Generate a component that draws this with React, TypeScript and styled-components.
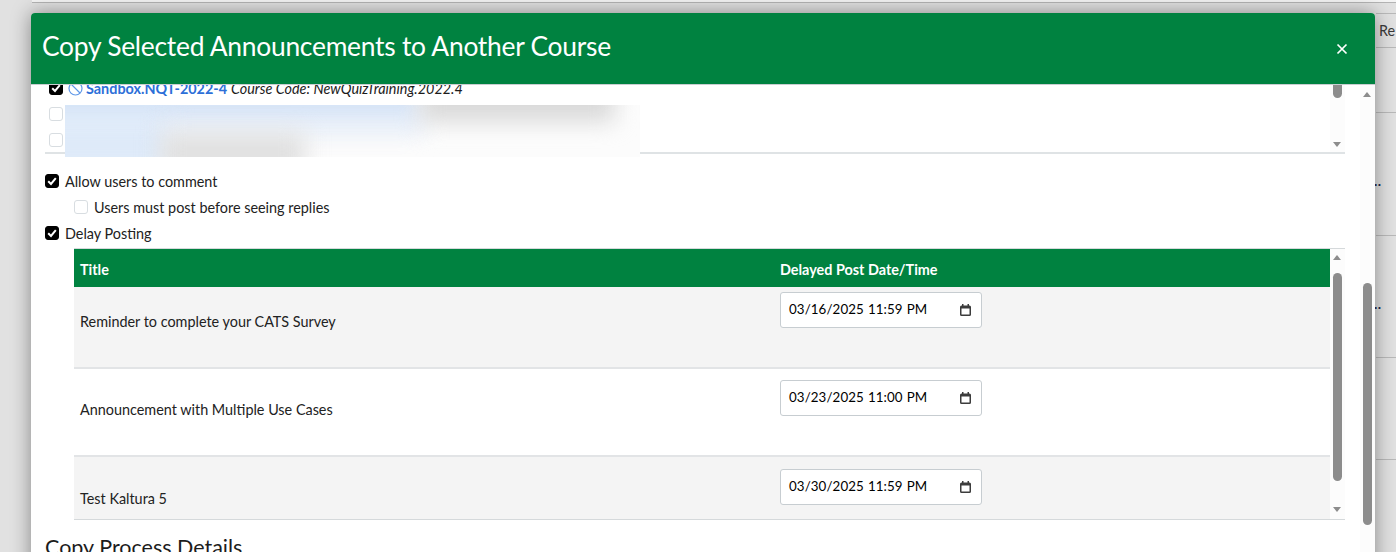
import * as React from "react";
import styled, { createGlobalStyle } from "styled-components";

const GlobalStyle = createGlobalStyle`
  html, body {
    margin: 0;
    padding: 0;
    background: #e1e1e1;
    font-family: "Lato", "Liberation Sans", sans-serif;
    overflow: hidden;
  }
`;

const green = "#008240";

const Page = styled.div`
  position: relative;
  width: 1396px;
  height: 552px;
  overflow: hidden;
  background: #e1e1e1;
`;

const TopBar = styled.div`
  height: 2px;
  margin-left: 32px;
  background: #f4f4f4;
  border-bottom: 1px solid #b4b4b4;
  margin-bottom: 10px;
`;

const BackRow = styled.div<{ $h: number }>`
  height: ${(p) => p.$h}px;
  margin-left: 1376px;
  border-top: 1px solid #b9b9b9;
  box-sizing: border-box;
  display: flex;
  align-items: center;
  padding-left: 3px;
  font-size: 14.4px;
  color: #3a3a3a;
  white-space: nowrap;
`;

const Dots = styled.span`
  font-size: 14px;
  font-weight: 700;
  letter-spacing: 0.4px;
  margin: 13px 0 0 -5px;
  color: #1a2a4a;
`;

const Modal = styled.div`
  position: absolute;
  left: 31px;
  top: 13px;
  width: 1344px;
  height: 600px;
  background: #fff;
  border-radius: 4px 4px 0 0;
  box-shadow: 0 0 20px rgba(0, 0, 0, 0.4);
  display: flex;
  flex-direction: column;
`;

const Header = styled.header`
  height: 72px;
  flex-shrink: 0;
  box-sizing: border-box;
  background: ${green};
  border-radius: 4px 4px 0 0;
  border-bottom: 1px solid #c8cdd0;
  display: flex;
  align-items: center;
  justify-content: space-between;
  padding: 0 27px 6px 11px;
  color: #fff;
`;

const Title = styled.h1`
  margin: 0;
  font-size: 26.4px;
  font-weight: 400;
  letter-spacing: -0.26px;
  line-height: 32px;
`;

const CloseIcon = styled.svg`
  width: 12px;
  height: 12px;
  margin-top: 6px;
  stroke: #fff;
  stroke-width: 1.7;
  fill: none;
`;

const Body = styled.div`
  flex: 1;
  display: flex;
  min-height: 0;
`;

const Content = styled.div`
  flex: 1;
  min-width: 0;
  padding-left: 14px;
  padding-right: 15px;
`;

const CourseList = styled.div`
  position: relative;
  height: 69px;
  box-sizing: border-box;
  border-bottom: 2px solid #dfe3e5;
  display: flex;
`;

const CourseRows = styled.div`
  flex: 1;
  min-width: 0;
  overflow: hidden;
  padding-left: 4px;
`;

const CourseRow = styled.div`
  height: 26px;
  display: flex;
  align-items: center;
  font-size: 14.4px;
  color: #1c1c1c;
  &:first-child {
    margin-top: -10px;
  }
`;

const CourseLink = styled.a`
  color: #2d6fd8;
  font-weight: 700;
  margin: 0 4px 0 3px;
`;

const CourseCode = styled.em`
  font-style: italic;
`;

const BlurCover = styled.div`
  position: absolute;
  left: 20px;
  top: 20px;
  width: 575px;
  height: 52px;
  background: #fcfcfc;
  overflow: hidden;
`;

const Smudge = styled.div<{ $x: number; $y: number; $w: number; $h: number; $c: string }>`
  position: absolute;
  left: ${(p) => p.$x}px;
  top: ${(p) => p.$y}px;
  width: ${(p) => p.$w}px;
  height: ${(p) => p.$h}px;
  background: ${(p) => p.$c};
  filter: blur(11px);
`;

const Box = styled.span<{ $on?: boolean }>`
  width: 14px;
  height: 14px;
  box-sizing: border-box;
  flex-shrink: 0;
  border-radius: 3px;
  margin-right: 6px;
  display: inline-flex;
  align-items: center;
  justify-content: center;
  background: ${(p) => (p.$on ? "#000" : "#fff")};
  border: 1px solid ${(p) => (p.$on ? "#000" : "#d8dde1")};
`;

const CheckMark = styled.svg`
  width: 10px;
  height: 10px;
  stroke: #fff;
  stroke-width: 2;
  fill: none;
`;

const BanIcon = styled.svg`
  width: 15px;
  height: 15px;
  margin-left: -1px;
  flex-shrink: 0;
  stroke: #5f98e8;
  stroke-width: 1.2;
  fill: none;
`;

const Options = styled.div`
  padding-top: 14px;
`;

const Option = styled.label<{ $indent?: boolean }>`
  height: 26px;
  display: flex;
  align-items: center;
  font-size: 14.4px;
  color: #222;
  padding-left: ${(p) => (p.$indent ? "29px" : "0")};
`;

const TableScroll = styled.div`
  margin-left: 29px;
  margin-top: 2px;
  height: 272px;
  box-sizing: border-box;
  border-top: 1px solid #d5d9db;
  border-bottom: 1px solid #d5d9db;
  display: flex;
  overflow: hidden;
`;

const Table = styled.div`
  flex: 1;
  min-width: 0;
`;

const HeadRow = styled.div`
  height: 38px;
  box-sizing: border-box;
  padding-top: 2px;
  display: grid;
  grid-template-columns: 700px 1fr;
  align-items: center;
  background: ${green};
  color: #fff;
  font-size: 14.4px;
  font-weight: 700;
`;

const HeadCell = styled.div`
  padding-left: 6px;
`;

const DataRow = styled.div<{ $h: number; $alt?: boolean; $last?: boolean }>`
  height: ${(p) => p.$h}px;
  box-sizing: border-box;
  display: grid;
  grid-template-columns: 700px 1fr;
  background: ${(p) => (p.$alt ? "#f4f4f4" : "#fff")};
  border-bottom: ${(p) => (p.$last ? "none" : "2px solid #e2e4e6")};
  font-size: 14.4px;
  color: #222;
`;

const TitleCell = styled.div<{ $top: number }>`
  padding: ${(p) => p.$top}px 0 0 6px;
  line-height: 20px;
`;

const DateCell = styled.div<{ $top: number }>`
  padding: ${(p) => p.$top}px 0 0 6px;
`;

const DateField = styled.div`
  width: 202px;
  height: 36px;
  box-sizing: border-box;
  background: #fff;
  border: 1px solid #c7cdd1;
  border-radius: 3px;
  padding: 0 10px 0 8px;
  display: flex;
  align-items: center;
  justify-content: space-between;
  font-size: 13.33px;
  letter-spacing: 0.1px;
  word-spacing: 0.5px;
  color: #000;
`;

const DateText = styled.span`
  margin-bottom: 3px;
`;

const CalendarIcon = styled.svg`
  width: 11px;
  height: 12px;
  fill: #3c3c3c;
`;

const Track = styled.div`
  position: relative;
  width: 15px;
  flex-shrink: 0;
  background: #fcfcfc;
`;

const Thumb = styled.div<{ $top: number; $h: number; $clip?: boolean }>`
  position: absolute;
  left: 3px;
  top: ${(p) => p.$top}px;
  width: 9px;
  height: ${(p) => p.$h}px;
  border-radius: ${(p) => (p.$clip ? "0 0 5px 5px" : "5px")};
  background: #8c8c8c;
`;

const Arrow = styled.div<{ $top: number; $down?: boolean }>`
  position: absolute;
  left: 3px;
  top: ${(p) => p.$top}px;
  width: 0;
  height: 0;
  border-left: 4.5px solid transparent;
  border-right: 4.5px solid transparent;
  ${(p) =>
    p.$down ? "border-top: 5px solid #8c8c8c;" : "border-bottom: 5px solid #8c8c8c;"}
`;

const SectionTitle = styled.h2`
  margin: 14px 0 0;
  font-size: 21.5px;
  font-weight: 400;
  line-height: 26px;
  color: #1c1c1c;
`;

const Check = ({ on }: { on?: boolean }) => (
  <Box $on={on}>
    {on && (
      <CheckMark viewBox="0 0 10 10">
        <path d="M1.2 5.2 L4 8 L8.8 2.2" />
      </CheckMark>
    )}
  </Box>
);

const rows = [
  { title: "Reminder to complete your CATS Survey", when: "03/16/2025 11:59 PM", h: 82, top: 25, dateTop: 5, alt: true },
  { title: "Announcement with Multiple Use Cases", when: "03/23/2025 11:00 PM", h: 88, top: 31, dateTop: 11 },
  { title: "Test Kaltura 5", when: "03/30/2025 11:59 PM", h: 62, top: 32, dateTop: 12, alt: true, last: true }
];

export default function App() {
  return (
    <Page>
      <GlobalStyle />
      <TopBar />
      <BackRow $h={34}>Re</BackRow>
      <BackRow $h={65} />
      <BackRow $h={123}>
        <Dots>..</Dots>
      </BackRow>
      <BackRow $h={122}>
        <Dots>..</Dots>
      </BackRow>
      <BackRow $h={102} />
      <BackRow $h={100} />
      <Modal>
        <Header>
          <Title>Copy Selected Announcements to Another Course</Title>
          <CloseIcon viewBox="0 0 12 12">
            <path d="M1.5 1.5 L10.5 10.5 M10.5 1.5 L1.5 10.5" />
          </CloseIcon>
        </Header>
        <Body>
          <Content>
            <CourseList>
              <CourseRows>
                <CourseRow>
                  <Check on />
                  <BanIcon viewBox="0 0 15 15">
                    <circle cx="7.5" cy="7.5" r="6.5" />
                    <path d="M3 3 L12 12" />
                  </BanIcon>
                  <CourseLink>Sandbox.NQT-2022-4</CourseLink>
                  <CourseCode>Course Code: NewQuizTraining.2022.4</CourseCode>
                </CourseRow>
                <CourseRow>
                  <Check />
                </CourseRow>
                <CourseRow>
                  <Check />
                </CourseRow>
              </CourseRows>
              <BlurCover>
                <Smudge $x={-30} $y={-30} $w={385} $h={52} $c="#d6e4f7" />
                <Smudge $x={-30} $y={10} $w={135} $h={60} $c="#deeaf9" />
                <Smudge $x={100} $y={16} $w={260} $h={12} $c="#ecf1f9" />
                <Smudge $x={355} $y={-25} $w={195} $h={42} $c="#d9d9d9" />
                <Smudge $x={95} $y={28} $w={145} $h={40} $c="#e0e0e0" />
              </BlurCover>
              <Track>
                <Thumb $clip $top={0} $h={13} />
                <Arrow $top={57} $down />
              </Track>
            </CourseList>
            <Options>
              <Option>
                <Check on />
                Allow users to comment
              </Option>
              <Option $indent>
                <Check />
                Users must post before seeing replies
              </Option>
              <Option>
                <Check on />
                Delay Posting
              </Option>
            </Options>
            <TableScroll>
              <Table>
                <HeadRow>
                  <HeadCell>Title</HeadCell>
                  <HeadCell>Delayed Post Date/Time</HeadCell>
                </HeadRow>
                {rows.map((r) => (
                  <DataRow key={r.title} $h={r.h} $alt={r.alt} $last={r.last}>
                    <TitleCell $top={r.top}>{r.title}</TitleCell>
                    <DateCell $top={r.dateTop}>
                      <DateField>
                        <DateText>{r.when}</DateText>
                        <CalendarIcon viewBox="0 0 11 12">
                          <path d="M2 0h1.500v1.500h4V0H9v1.500h.5A1.500 1.500 0 0 1 11 3v7.500A1.500 1.500 0 0 1 9.500 12h-8A1.500 1.500 0 0 1 0 10.500V3a1.500 1.500 0 0 1 1.500-1.500H2V0zM1.500 4.500v6h8v-6h-8z" fillRule="evenodd" />
                        </CalendarIcon>
                      </DateField>
                    </DateCell>
                  </DataRow>
                ))}
              </Table>
              <Track>
                <Arrow $top={6} />
                <Thumb $top={24} $h={208} />
                <Arrow $top={258} $down />
              </Track>
            </TableScroll>
            <SectionTitle>Copy Process Details</SectionTitle>
          </Content>
          <Track>
            <Arrow $top={7} />
            <Thumb $top={198} $h={242} />
          </Track>
        </Body>
      </Modal>
    </Page>
  );
}
